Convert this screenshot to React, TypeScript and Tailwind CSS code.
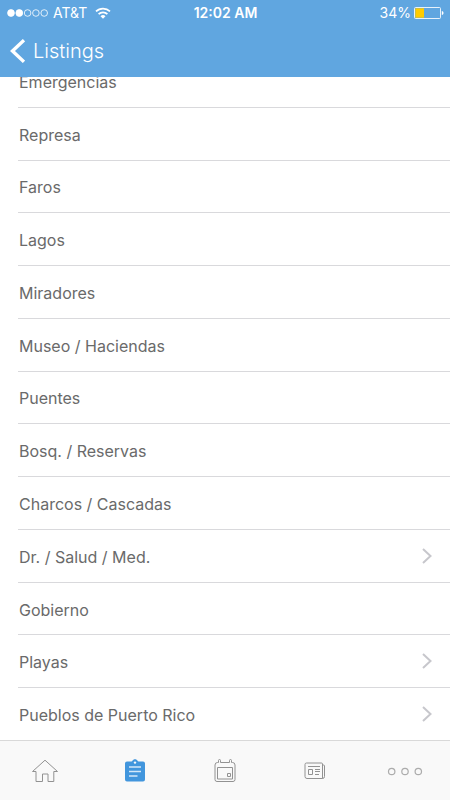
import { clsx } from 'clsx'

interface Listing {
  name: string
  hasChildren?: boolean
}

const LISTINGS: Listing[] = [
  { name: 'Emergencias' },
  { name: 'Represa' },
  { name: 'Faros' },
  { name: 'Lagos' },
  { name: 'Miradores' },
  { name: 'Museo / Haciendas' },
  { name: 'Puentes' },
  { name: 'Bosq. / Reservas' },
  { name: 'Charcos / Cascadas' },
  { name: 'Dr. / Salud / Med.', hasChildren: true },
  { name: 'Gobierno' },
  { name: 'Playas', hasChildren: true },
  { name: 'Pueblos de Puerto Rico', hasChildren: true },
]

const TABS = [
  { label: 'Home', Icon: HomeIcon },
  { label: 'Listings', Icon: ClipboardIcon, active: true },
  { label: 'Events', Icon: CalendarIcon },
  { label: 'News', Icon: NewsIcon },
  { label: 'More', Icon: MoreIcon },
]

function SignalDots() {
  return (
    <svg className="h-3 w-[42px]" viewBox="0 0 42 12" stroke="white" strokeWidth="0.8" aria-hidden="true">
      <circle cx="4" cy="6" r="3.4" fill="white" />
      <circle cx="12.3" cy="6" r="3.4" fill="white" />
      <circle cx="20.6" cy="6" r="3.3" fill="none" />
      <circle cx="28.9" cy="6" r="3.3" fill="none" />
      <circle cx="37.2" cy="6" r="3.3" fill="none" />
    </svg>
  )
}

function WifiIcon() {
  return (
    <svg className="ml-1 h-3 w-4" viewBox="0 0 16 12" fill="none" stroke="white" strokeWidth="1.7" aria-hidden="true">
      <path d="M1 4.4a10 10 0 0 1 14 0" />
      <path d="M3.6 7.2a6.2 6.2 0 0 1 8.8 0" />
      <path d="M8 11.8 5.5 9.2a3.6 3.6 0 0 1 5 0Z" fill="white" stroke="none" />
    </svg>
  )
}

function BatteryIcon() {
  return (
    <svg className="h-3 w-[30px]" viewBox="0 0 30 12" aria-hidden="true">
      <rect x="0.5" y="0.5" width="26" height="11" rx="1" fill="none" stroke="white" strokeOpacity="0.85" />
      <rect x="1.3" y="1.3" width="8.7" height="9.4" fill="#ffcc00" />
      <path d="M27.8 4v4c1.2-.3 1.7-1 1.7-2s-.5-1.7-1.7-2Z" fill="white" />
    </svg>
  )
}

function HomeIcon() {
  return (
    <svg className="h-6 w-7" viewBox="0 0 28 24" fill="none" stroke="currentColor" aria-hidden="true">
      <path d="M14 1.2 26.5 12.5H22.8V22.5H17V15H11.5V22.5H5V12.5H1.5Z" />
    </svg>
  )
}

function ClipboardIcon() {
  return (
    <svg className="h-6 w-7" viewBox="0 0 28 24" aria-hidden="true">
      <path
        d="M6 2.6h4.4c.6 0 .8-.3 1-.8C11.8.7 12.8.2 14 .2s2.200.5 2.600 1.600c.2.5.4.8 1 .8H22a2 2 0 0 1 2 2v16a2 2 0 0 1-2 2H6a2 2 0 0 1-2-2v-16a2 2 0 0 1 2-2Z"
        fill="currentColor"
      />
      <circle cx="14" cy="3.6" r="1.2" fill="#f9f9f9" />
      <path d="M8 8h12M8 12.5h12M8 17h8.5" stroke="#d3e8f9" strokeWidth="1.6" />
    </svg>
  )
}

function CalendarIcon() {
  return (
    <svg className="h-6 w-7" viewBox="0 0 28 24" fill="none" stroke="currentColor" aria-hidden="true">
      <path d="M7.500 3.500h-1a2.500 2.500 0 0 0-2.500 2.500v14.500a2 2 0 0 0 2 2h16a2 2 0 0 0 2-2V6a2.500 2.500 0 0 0-2.500-2.500h-1M9.500 3.500h9" />
      <path d="M7.500 3.500V1.500a1 1 0 0 1 2 0v2M18.500 3.500V1.500a1 1 0 0 1 2 0v2" />
      <path d="M6.500 8.500h15v11.500h-15z" />
      <path d="M16.500 14.500h3v3h-3z" />
    </svg>
  )
}

function NewsIcon() {
  return (
    <svg className="h-6 w-7" viewBox="0 0 28 24" fill="none" stroke="currentColor" aria-hidden="true">
      <path d="M5.500 4h15a1 1 0 0 1 1 1v14.500H6a2 2 0 0 1-2-2V5.500A1.500 1.500 0 0 1 5.500 4Z" />
      <path d="M21.500 6h1a1 1 0 0 1 1 1v10.500a2 2 0 0 1-2 2" />
      <path d="M7 7.500h12M14 10.500h5M14 12.500h5M14 15.500h4" />
      <path d="M7.500 10.500h4v5h-4z" />
    </svg>
  )
}

function MoreIcon() {
  return (
    <svg className="h-6 w-9" viewBox="0 0 36 24" fill="none" stroke="currentColor" strokeOpacity="0.75" strokeWidth="1.2" aria-hidden="true">
      <circle cx="4.7" cy="12.5" r="3.2" />
      <circle cx="18" cy="12.5" r="3.2" />
      <circle cx="31.3" cy="12.5" r="3.2" />
    </svg>
  )
}

function StatusBar() {
  return (
    <div className="grid h-[25px] grid-cols-3 items-center pr-1.5 pl-[7px] text-sm leading-none">
      <div className="flex items-center gap-1">
        <SignalDots />
        <span>AT&amp;T</span>
        <WifiIcon />
      </div>
      <span className="text-center font-semibold">12:02 AM</span>
      <div className="flex items-center justify-end gap-[3px]">
        <span>34%</span>
        <BatteryIcon />
      </div>
    </div>
  )
}

function ListingRow({ name, hasChildren }: Listing) {
  return (
    <li className="flex min-h-12 flex-1 border-b border-[#d9d9dc]">
      <a href="#" className="flex flex-1 items-center justify-between pr-[18px] pl-px">
        <span className="pt-0.5">{name}</span>
        {hasChildren && (
          <svg className="h-4 w-2.5" viewBox="0 0 10 16" fill="none" stroke="#c7c7cc" strokeWidth="2" aria-hidden="true">
            <path d="m1 1 7.500 7L1 15" />
          </svg>
        )}
      </a>
    </li>
  )
}

export default function App() {
  return (
    <div className="flex h-screen flex-col bg-white font-[Inter,sans-serif]">
      <header className="z-10 bg-[#60a6e0] text-white">
        <StatusBar />
        <div className="flex h-[52px] items-center px-2.5">
          <button type="button" className="flex items-center gap-2 text-xl leading-6 font-light">
            <svg className="h-6 w-[15px]" viewBox="0 0 15 24" fill="none" stroke="white" strokeWidth="3.4" aria-hidden="true">
              <path d="M14 1.2 2.5 12 14 22.8" />
            </svg>
            Listings
          </button>
        </div>
      </header>

      <main className="flex min-h-0 flex-1 flex-col overflow-hidden">
        {/* the list is scrolled, so its first row is partly under the header */}
        <ul className="-mt-[22px] -mb-px flex flex-1 flex-col pl-[18px] text-base text-[#6a6a6a]">
          {LISTINGS.map((listing) => (
            <ListingRow key={listing.name} {...listing} />
          ))}
        </ul>
      </main>

      <nav className="grid h-[60px] shrink-0 grid-cols-5 border-t border-[#d9d9d9] bg-[#f9f9f9]">
        {TABS.map(({ label, Icon, active }) => (
          <button
            key={label}
            type="button"
            aria-label={label}
            className={clsx('flex items-center justify-center', active ? 'text-[#4296dd]' : 'text-[#929292]')}
          >
            <Icon />
          </button>
        ))}
      </nav>
    </div>
  )
}
